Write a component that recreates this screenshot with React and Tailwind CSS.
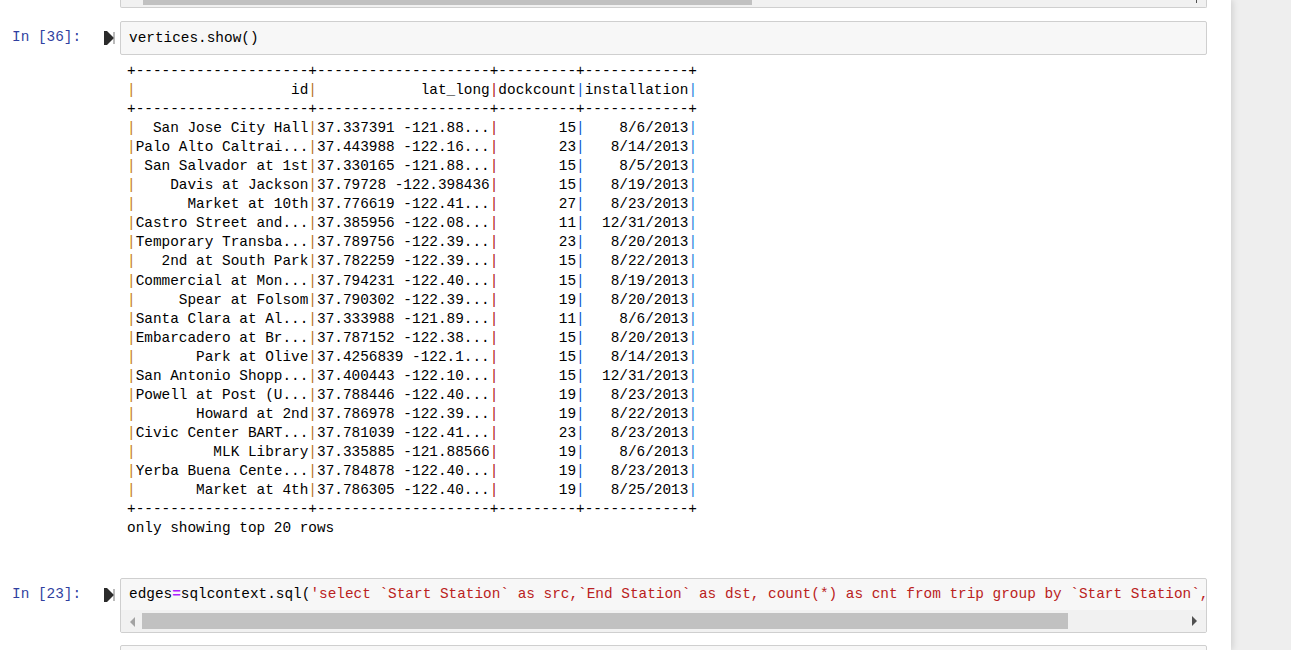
import React from "react";

const mono = { fontFamily: '"Liberation Mono", "DejaVu Sans Mono", monospace' };

const rows = [
  ["San Jose City Hall", "37.337391 -121.88...", "15", "8/6/2013"],
  ["Palo Alto Caltrai...", "37.443988 -122.16...", "23", "8/14/2013"],
  ["San Salvador at 1st", "37.330165 -121.88...", "15", "8/5/2013"],
  ["Davis at Jackson", "37.79728 -122.398436", "15", "8/19/2013"],
  ["Market at 10th", "37.776619 -122.41...", "27", "8/23/2013"],
  ["Castro Street and...", "37.385956 -122.08...", "11", "12/31/2013"],
  ["Temporary Transba...", "37.789756 -122.39...", "23", "8/20/2013"],
  ["2nd at South Park", "37.782259 -122.39...", "15", "8/22/2013"],
  ["Commercial at Mon...", "37.794231 -122.40...", "15", "8/19/2013"],
  ["Spear at Folsom", "37.790302 -122.39...", "19", "8/20/2013"],
  ["Santa Clara at Al...", "37.333988 -121.89...", "11", "8/6/2013"],
  ["Embarcadero at Br...", "37.787152 -122.38...", "15", "8/20/2013"],
  ["Park at Olive", "37.4256839 -122.1...", "15", "8/14/2013"],
  ["San Antonio Shopp...", "37.400443 -122.10...", "15", "12/31/2013"],
  ["Powell at Post (U...", "37.788446 -122.40...", "19", "8/23/2013"],
  ["Howard at 2nd", "37.786978 -122.39...", "19", "8/22/2013"],
  ["Civic Center BART...", "37.781039 -122.41...", "23", "8/23/2013"],
  ["MLK Library", "37.335885 -121.88566", "19", "8/6/2013"],
  ["Yerba Buena Cente...", "37.784878 -122.40...", "19", "8/23/2013"],
  ["Market at 4th", "37.786305 -122.40...", "19", "8/25/2013"],
];

const widths = [20, 20, 9, 12];
const pipeColors = ["#c47d12", "#b8701a", "#b0101a", "#0a55d0", "#1a7ee0"];
const border = "+" + widths.map((w) => "-".repeat(w)).join("+") + "+";

function TableRow({ cells }) {
  return (
    <div>
      <span style={{ color: pipeColors[0] }}>|</span>
      {cells.map((c, i) => (
        <React.Fragment key={i}>
          {c.padStart(widths[i], " ")}
          <span style={{ color: pipeColors[i + 1] }}>|</span>
        </React.Fragment>
      ))}
    </div>
  );
}

function RunIcon() {
  return (
    <svg width="11" height="14" viewBox="0 0 11 14" className="block">
      <rect x="0" y="0" width="3" height="14" fill="#2b2b2b" />
      <path d="M3 0 L10 7 L3 14 Z" fill="#2b2b2b" />
      <rect x="9.5" y="1" width="1" height="12" fill="#777" />
    </svg>
  );
}

function Scrollbar({ thumbLeft, thumbWidth }) {
  return (
    <div className="relative h-[22px] bg-[#f1f1f1]">
      <div className="absolute left-[9px] top-[7px] w-0 h-0 border-y-[5px] border-y-transparent border-r-[5px] border-r-[#a3a3a3]" />
      <div
        className="absolute top-[3px] h-[16px] bg-[#c1c1c1]"
        style={{ left: thumbLeft, width: thumbWidth }}
      />
      <div className="absolute right-[9px] top-[6px] w-0 h-0 border-y-[5px] border-y-transparent border-l-[5px] border-l-[#505050]" />
    </div>
  );
}

export default function App() {
  return (
    <div className="flex h-[650px] overflow-hidden bg-[#eeeeee]" style={mono}>
      <div className="w-[1231px] shrink-0 bg-white shadow-[2px_0_6px_rgba(0,0,0,0.12)] text-[14.4px] text-black">
        {/* previous cell tail */}
        <div className="flex">
          <div className="w-[120px] shrink-0" />
          <div className="flex-1 mr-[24px] h-[8px] overflow-hidden border-x border-b border-[#cfcfcf] rounded-b-[2px] bg-[#f1f1f1] relative">
            <div className="absolute left-[22px] top-0 h-[5px] w-[609px] bg-[#c1c1c1]" />
            <div className="absolute right-[9px] top-0 h-[3px] w-[1px] bg-[#505050]" />
          </div>
        </div>

        {/* In [36] */}
        <div className="flex mt-[13px]">
          <div className="w-[104px] shrink-0 pl-[12px] pt-[7px] leading-[19px] text-[#303f9f]">In [36]:</div>
          <div className="w-[16px] shrink-0 pt-[10px]">
            <RunIcon />
          </div>
          <div className="flex-1 mr-[24px]">
            <div className="h-[34px] border border-[#cfcfcf] rounded-[2px] bg-[#f7f7f7] pl-[8px] pt-[7px] leading-[19px]">
              vertices.show()
            </div>
            <pre className="pl-[7px] pt-[7px] leading-[19.05px] whitespace-pre" style={mono}>
              <div>{border}</div>
              <TableRow cells={["id", "lat_long", "dockcount", "installation"]} />
              <div>{border}</div>
              {rows.map((r, i) => (
                <TableRow key={i} cells={r} />
              ))}
              <div>{border}</div>
              <div>only showing top 20 rows</div>
            </pre>
          </div>
        </div>

        {/* In [23] */}
        <div className="flex mt-[40px]">
          <div className="w-[104px] shrink-0 pl-[12px] pt-[7px] leading-[19px] text-[#303f9f]">In [23]:</div>
          <div className="w-[16px] shrink-0 pt-[10px]">
            <RunIcon />
          </div>
          <div className="flex-1 mr-[24px] min-w-0">
            <div className="h-[55px] border border-[#cfcfcf] rounded-[2px] bg-[#f7f7f7] overflow-hidden">
              <div className="pl-[8px] pt-[6px] h-[31px] leading-[19px] whitespace-pre overflow-hidden">
                edges<span className="text-[#aa22ff] font-bold">=</span>sqlcontext.sql(
                <span className="text-[#ba2121]">
                  'select `Start Station` as src,`End Station` as dst, count(*) as cnt from trip group by `Start Station`,`End Station`')
                </span>
              </div>
              <Scrollbar thumbLeft={21} thumbWidth={926} />
            </div>
            <div className="mt-[12px] h-[20px] border border-[#cfcfcf] rounded-[2px] bg-[#f7f7f7]" />
          </div>
        </div>
      </div>
    </div>
  );
}
